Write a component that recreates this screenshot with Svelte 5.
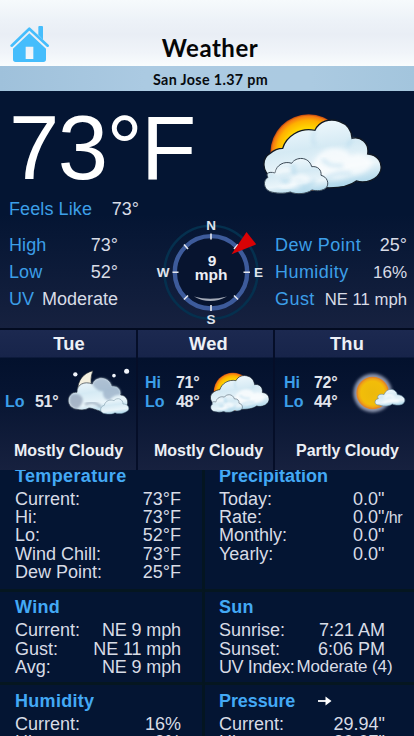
<script>
  const today = [
    { label: 'Feels Like', value: '73°', cls: 'feels' },
    { label: 'High', value: '73°', cls: '' },
    { label: 'Low', value: '52°', cls: '' },
    { label: 'UV', value: 'Moderate', cls: '' }
  ];
  const air = [
    { label: 'Dew Point', value: '25°', cls: '' },
    { label: 'Humidity', value: '16%', cls: 'small' },
    { label: 'Gust', value: 'NE 11 mph', cls: 'small gust' }
  ];
  const days = [
    { id: 'tue', name: 'Tue', hi: '', lo: '51°', text: 'Mostly Cloudy' },
    { id: 'wed', name: 'Wed', hi: '71°', lo: '48°', text: 'Mostly Cloudy' },
    { id: 'thu', name: 'Thu', hi: '72°', lo: '44°', text: 'Partly Cloudy' }
  ];
  const panels = [
    { title: 'Temperature', id: 'temperature', rows: [['Current:', '73°F'], ['Hi:', '73°F'], ['Lo:', '52°F'], ['Wind Chill:', '73°F'], ['Dew Point:', '25°F']] },
    { title: 'Precipitation', id: 'precipitation', rows: [['Today:', '0.0"'], ['Rate:', '0.0"', '/hr'], ['Monthly:', '0.0"'], ['Yearly:', '0.0"']] },
    { title: 'Wind', id: 'wind', rows: [['Current:', 'NE 9 mph'], ['Gust:', 'NE 11 mph'], ['Avg:', 'NE 9 mph']] },
    { title: 'Sun', id: 'sun', rows: [['Sunrise:', '7:21 AM'], ['Sunset:', '6:06 PM'], ['UV Index:', 'Moderate (4)']] },
    { title: 'Humidity', id: 'humidity', rows: [['Current:', '16%'], ['Hi:', '9%']] },
    { title: 'Pressure', id: 'pressure', rows: [['Current:', '29.94"'], ['Hi:', '30.07"']] }
  ];
</script>

{#snippet sunCloud(cls)}
  <svg class={cls} viewBox="68 55 360 250" aria-hidden="true">
    <circle cx="205" cy="174" r="115" fill="url(#sunGrad)" />
    <path d="M92 245C66 232 63 192 88 177C100 167 116 161 127 161C137 126 178 97 224 107C236 80 268 70 296 80C320 88 334 108 335 131C359 124 388 144 382 178C413 180 427 205 421 228C413 255 375 268 348 259C328 275 288 281 250 279L110 282Z" fill="url(#cloudGrad)" stroke="#101722" stroke-width="4" />
    <path d="M224 108C214 125 216 142 226 152M335 131C332 142 326 150 318 156" fill="none" stroke="#b4d9ec" stroke-width="7" opacity=".75" filter="url(#soft)" />
    <path d="M215 228C214 191 247 159 284 160C314 160 329 178 332 184C357 171 385 182 397 203C384 240 354 238 326 246C285 260 239 260 215 228Z" fill="#fff" opacity=".7" filter="url(#soft)" />
    <path d="M246 194C263 213 281 215 308 213M254 252Q292 231 334 237" fill="none" stroke="#a5d2e9" stroke-width="9" opacity=".55" filter="url(#soft)" />
    <path d="M89 291C69 283 67 256 83 248C74 235 88 230 104 235C107 211 132 198 154 206C166 186 205 184 214 216C233 214 244 226 242 242C260 246 268 266 258 279C248 289 229 290 215 286C198 299 166 300 150 292C130 298 107 296 89 291Z" fill="url(#cloudGrad)" stroke="#3b4956" stroke-width="3" />
    <path d="M104 238C127 218 145 235 157 223M155 250Q188 239 205 257M121 275Q143 282 166 263" fill="none" stroke="#fff" stroke-width="13" opacity=".75" filter="url(#soft)" />
    <path d="M162 211Q151 229 166 238M123 257Q137 265 147 258M178 279Q207 277 224 258" fill="none" stroke="#93c9e4" stroke-width="7" opacity=".7" filter="url(#soft)" />
  </svg>
{/snippet}

{#snippet nightCloud()}
  <svg class="ico-tue" viewBox="200 125 190 145" aria-hidden="true">
    <path d="M278 136C248 144 232 166 232 195C239 212 270 205 276 190C270 173 271 153 278 136Z" fill="#f4f0df" stroke="#232a33" stroke-width="2" />
    <g fill="#f1f5fb"><circle cx="225" cy="147" r="6.5" /><circle cx="341" cy="151" r="5.5" /><circle cx="379" cy="138" r="7.5" /></g>
    <path d="M230 252C205 250 196 222 211 208C216 202 224 200 230 201C229 178 252 166 276 176C285 150 325 150 335 182C353 180 364 194 361 209C379 210 386 228 380 240L345 262C310 267 280 248 266 248C254 255 241 255 230 252Z" fill="url(#cloudGrad)" stroke="#29323e" stroke-width="2" />
    <path d="M276 176C285 151 327 151 335 182C353 180 364 194 361 208C344 208 333 217 327 225C309 223 306 205 309 198C295 199 282 188 276 176Z" fill="#8fa5bf" opacity=".65" filter="url(#tiny)" />
    <path d="M211 210C224 200 243 207 247 221C248 235 237 250 226 250C208 247 202 228 211 210Z" fill="#8e9db3" opacity=".7" filter="url(#tiny)" />
    <path d="M254 238Q280 223 302 246" fill="none" stroke="#91a3b5" stroke-width="8" opacity=".7" filter="url(#tiny)" />
    <path d="M309 264C297 259 299 243 312 240C315 225 331 222 341 226C351 214 369 222 368 236C386 236 390 253 380 258C366 268 350 265 344 262C332 269 318 266 309 264Z" fill="url(#cloudGrad)" stroke="#6a8798" stroke-width="1.5" />
  </svg>
{/snippet}

{#snippet sunny()}
  <svg class="ico-thu" viewBox="438 130 170 145" aria-hidden="true">
    <circle cx="506" cy="202" r="58" fill="#b9c1d8" opacity=".75" filter="url(#halo)" />
    <circle cx="506" cy="202" r="47" fill="url(#fullSun)" stroke="#e18728" stroke-width="4" />
    <path d="M525 238C510 239 509 221 523 219C516 209 530 203 540 207C548 184 577 188 580 207C596 208 608 220 600 231C592 241 574 239 565 235C552 244 534 241 525 238Z" fill="url(#cloudGrad)" stroke="#6d8b9e" stroke-width="2" />
    <path d="M540 216Q559 202 570 216M538 231Q562 219 584 228" fill="none" stroke="#fff" stroke-width="7" opacity=".8" filter="url(#tiny)" />
  </svg>
{/snippet}

<svg class="defs" width="0" height="0" aria-hidden="true">
  <defs>
    <radialGradient id="sunGrad"><stop offset=".65" stop-color="#ffd500" /><stop offset=".84" stop-color="#ffb000" /><stop offset=".95" stop-color="#f47a12" /><stop offset="1" stop-color="#b8430f" /></radialGradient>
    <radialGradient id="fullSun"><stop offset="0" stop-color="#ecb90b" /><stop offset=".75" stop-color="#f2bd09" /><stop offset="1" stop-color="#ed941b" /></radialGradient>
    <linearGradient id="cloudGrad" x1=".35" y1="0" x2=".6" y2="1"><stop offset="0" stop-color="#f1f9fd" /><stop offset=".4" stop-color="#d5eaf4" /><stop offset=".72" stop-color="#eaf5fa" /><stop offset="1" stop-color="#a9d4e9" /></linearGradient>
    <filter id="soft"><feGaussianBlur stdDeviation="6" /></filter>
    <filter id="tiny"><feGaussianBlur stdDeviation="3" /></filter>
    <filter id="halo" x="-30%" y="-30%" width="160%" height="160%"><feGaussianBlur stdDeviation="5" /></filter>
  </defs>
</svg>

<div class="app">
  <header>
    <svg class="home" viewBox="30 76 120 114" aria-hidden="true">
      <path d="M35 138L88 87L143 138" fill="none" stroke="#45bdfc" stroke-width="8" stroke-linecap="round" stroke-linejoin="round" />
      <path d="M115 105V82Q115 79 118 79H126Q129 79 129 82V120Z" fill="#45bdfc" />
      <path fill-rule="evenodd" d="M88 101L138 147V179Q138 187 130 187H47Q39 187 39 179V147ZM77 141V178H100V141Z" fill="#45bdfc" />
    </svg>
    <h1>Weather</h1>
  </header>
  <div class="place">San Jose 1.37 pm</div>

  <section class="now">
    <div class="hero">
      <div class="temp">73°F</div>
      {@render sunCloud('ico-now')}
    </div>
    <div class="stats">
      <div class="left">
        {#each today as s}
          <div class="stat {s.cls}"><span>{s.label}</span><b>{s.value}</b></div>
        {/each}
      </div>
      <svg class="compass" viewBox="150 210 122 118">
        <circle cx="211" cy="272.3" r="46.5" fill="none" stroke="#05304e" stroke-width="2.6" />
        <circle cx="211" cy="272.3" r="36.2" fill="#07142f" stroke="#3d5b9b" stroke-width="4.4" />
        <path d="M194 296.5Q210 305.5 227 296.5Q210 301 194 296.5Z" fill="#cbd0da" opacity=".8" />
        <path d="M211 233.5V239.5M211 305V311M172.5 272.3H178.5M243.5 272.3H250M184 244.5L188 249M234 249L238 244.5M184 299.5L188 295.5M234 295.5L238 299.5" stroke="#e6e9f0" stroke-width="1.6" />
        <path d="M231.5 254.2L246.5 232L256.2 244.3Z" fill="#d80205" />
        <g class="dir" text-anchor="middle">
          <text x="211" y="230">N</text><text x="211" y="323.5">S</text><text x="163" y="277">W</text><text x="258.5" y="277">E</text>
        </g>
        <g class="speed" text-anchor="middle"><text x="212" y="266.3">9</text><text x="211" y="279.8">mph</text></g>
      </svg>
      <div class="right">
        {#each air as s}
          <div class="stat {s.cls}"><span>{s.label}</span><b>{s.value}</b></div>
        {/each}
      </div>
    </div>
  </section>

  <section class="forecast">
    {#each days as d}
      <article class={d.id}>
        <h2>{d.name}</h2>
        <div class="day">
          <div class="range">
            <div><span>{d.hi ? 'Hi' : ''}</span>{d.hi}</div>
            <div><span>Lo</span>{d.lo}</div>
          </div>
          {#if d.id === 'tue'}{@render nightCloud()}{:else if d.id === 'wed'}{@render sunCloud('ico-wed')}{:else}{@render sunny()}{/if}
        </div>
        <p>{d.text}</p>
      </article>
    {/each}
  </section>

  <section class="details">
    {#each panels as p}
      <article class={p.id}>
        <h3>{p.title}
          {#if p.id === 'pressure'}
            <svg viewBox="0 0 14 10" aria-hidden="true"><path d="M0 5H9" stroke="#fff" stroke-width="1.8" /><path d="M7.5 .5L13.5 5L7.5 9.5Z" fill="#fff" /></svg>
          {/if}
        </h3>
        {#each p.rows as [label, value, unit]}
          <div class="row"><span>{label}</span><span class="val">{value}{#if unit}<small>{unit}</small>{/if}</span></div>
        {/each}
      </article>
    {/each}
  </section>
</div>

<style>
  :global(body) { margin: 0; overflow: hidden; background: #041533; }
  .defs { position: absolute; }
  .app { width: 414px; height: 736px; overflow: hidden; display: flex; flex-direction: column; background: #041533; font-family: "Liberation Sans", Arial, sans-serif; color: #d8dce6; white-space: nowrap; }
  h1, h2, h3, p { margin: 0; }
  svg { flex: none; display: block; }
  header { height: 66px; flex: none; display: grid; grid-template-columns: 50px 1fr 54px; box-sizing: border-box; padding: 25px 0 0 10px; background: linear-gradient(#f6fafc 0, #edf2f8 30%, #e9eef5 52%, #f0f4f9 80%, #f9fcfd 100%); }
  .home { width: 40px; height: 38px; }
  h1 { font: 700 24px/30px Lato, sans-serif; letter-spacing: .5px; color: #050607; text-align: center; padding-top: 8px; }
  .place { height: 25px; flex: none; background: linear-gradient(90deg, #9fc1db, #abcae2 35%, #abcae1 75%, #a3c5dd); font: 700 14.3px/28px Lato, sans-serif; letter-spacing: .35px; text-align: center; padding-left: 7px; color: #070b10; }

  .now { height: 237px; flex: none; background: linear-gradient(#041533 0, #041533 52%, #16213f 100%); display: flex; flex-direction: column; }
  .hero { height: 105px; display: flex; justify-content: space-between; padding: 0 31px 0 9px; }
  .temp { font-size: 90.5px; line-height: 114px; color: #fff; letter-spacing: -1.6px; }
  .ico-now { width: 120px; height: 83.3px; margin-top: 22px; }
  .stats { display: flex; height: 132px; }
  .left { width: 150px; box-sizing: border-box; padding-left: 9px; }
  .compass { width: 122px; height: 118px; margin-top: 14px; overflow: visible; }
  .dir text { font-size: 13.5px; font-weight: 700; fill: #dfe3ec; }
  .speed text { font-size: 15.5px; font-weight: 700; fill: #eceff5; }
  .right { width: 133px; padding: 36px 0 0 3px; }
  .stat { display: flex; justify-content: space-between; font-size: 18px; line-height: 27px; height: 27px; width: 109px; }
  .stat span { color: #3c9fe8; letter-spacing: .1px; }
  .stat b { font-weight: 400; }
  .stat.feels { width: 130px; height: 36px; }
  .stat.small b { font-size: 17px; }
  .right .stat { width: 132px; }
  .right .stat span { letter-spacing: .45px; }
  .right .gust b { font-size: 16.7px; }

  .forecast { height: 142px; flex: none; display: grid; grid-template-columns: 138px 137px 139px; box-sizing: border-box; border-top: 2px solid #020b20; background: linear-gradient(#1c2950 0, #17244a 27px, #03112d 28px, #061431 60px, #17213f 142px); }
  .forecast article { display: flex; flex-direction: column; box-sizing: border-box; border-right: 2px solid #050e28; }
  .forecast article:last-child { border-right: 0; }
  h2 { font-size: 18.3px; line-height: 27px; height: 27px; text-align: center; color: #edf0f6; letter-spacing: .2px; padding-left: 2px; }
  .wed h2 { padding-left: 6px; }
  .thu h2 { padding-left: 5px; }
  .day { display: flex; height: 84px; align-items: flex-start; }
  .range { font-weight: 700; font-size: 16px; line-height: 19px; padding: 16px 0 0 5px; width: 62px; box-sizing: border-box; color: #e1e5ed; letter-spacing: -.3px; }
  .range div { display: flex; height: 19px; }
  .range span { width: 30px; color: #3c9fe8; letter-spacing: 0; }
  .wed .range { width: 72px; padding-left: 7px; }
  .thu .range { width: 75px; padding-left: 9px; }
  .wed .range span { width: 31px; }
  .ico-tue { width: 63.3px; height: 48.3px; margin: 10px 0 0 5px; }
  .ico-wed { width: 60px; height: 41.7px; margin-top: 15px; }
  .ico-thu { width: 56.7px; height: 48.3px; margin-top: 12px; }
  p { font-size: 16px; font-weight: 700; line-height: 20px; text-align: center; color: #eceff5; letter-spacing: -.02px; }
  .tue p { padding-left: 1px; }
  .wed p { padding-left: 6px; }
  .thu p { padding-left: 6px; }

  .details { flex: 1; min-height: 0; display: grid; grid-template-columns: 205px 209px; grid-template-rows: 122px 93px 60px; }
  .details article { box-sizing: border-box; padding: 0 0 0 15px; overflow: hidden; border-right: 3px solid #041521; border-bottom: 3px solid #051620; }
  .details article:nth-child(even) { padding-left: 14px; border-right: 0; }
  h3 { font-size: 18px; line-height: 22px; height: 23px; color: #43a9f5; letter-spacing: .3px; display: flex; align-items: center; margin-top: 3px; }
  .temperature h3, .precipitation h3 { margin-top: -6px; height: 24px; letter-spacing: .35px; }
  .precipitation h3 { letter-spacing: 0; }
  .pressure h3 { letter-spacing: -.1px; }
  .humidity h3, .pressure h3 { margin-top: 4px; }
  h3 svg { width: 14px; height: 10px; margin-left: 23px; }
  .row { display: flex; justify-content: space-between; font-size: 18px; line-height: 18.2px; height: 18.2px; width: 166px; }
  h3 + .row { margin-top: 2px; }
  .wind h3 + .row, .sun h3 + .row, .humidity h3 + .row, .pressure h3 + .row { margin-top: 3px; }
  .wind .row, .sun .row { height: 18.5px; line-height: 18.5px; }
  .precipitation .val { width: 32px; }
  .row small { font-size: 16px; letter-spacing: -.2px; }
  .wind .val { letter-spacing: -.12px; }
  .sun .row:last-child { letter-spacing: -.4px; }
  .sun .row:last-child .val { font-size: 17px; margin-right: -7.5px; letter-spacing: -.1px; }
</style>
